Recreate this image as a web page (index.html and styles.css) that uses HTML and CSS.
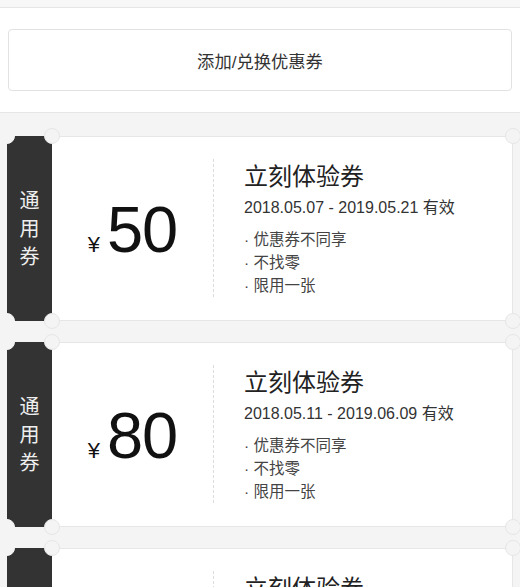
FILE: index.html
```html
<!DOCTYPE html>
<html lang="zh">
<head>
<meta charset="utf-8">
<title>优惠券</title>
<link rel="stylesheet" href="styles.css">
</head>
<body>
<div class="top-band"></div>
<div class="add-section">
  <button class="add-btn">添加/兑换优惠券</button>
</div>
<div class="coupons">
  <div class="coupon">
    <div class="tab"><span>通</span><span>用</span><span>券</span></div>
    <div class="body">
      <div class="price"><span class="yen">¥</span><span class="amount">50</span></div>
      <div class="divider"></div>
      <div class="info">
        <div class="title">立刻体验券</div>
        <div class="date">2018.05.07 - 2019.05.21 有效</div>
        <ul class="rules">
          <li>· 优惠券不同享</li>
          <li>· 不找零</li>
          <li>· 限用一张</li>
        </ul>
      </div>
    </div>
    <span class="notch n-tl"></span><span class="notch n-tm"></span><span class="notch n-tr"></span>
    <span class="notch n-bl"></span><span class="notch n-bm"></span><span class="notch n-br"></span>
  </div>
  <div class="coupon">
    <div class="tab"><span>通</span><span>用</span><span>券</span></div>
    <div class="body">
      <div class="price"><span class="yen">¥</span><span class="amount">80</span></div>
      <div class="divider"></div>
      <div class="info">
        <div class="title">立刻体验券</div>
        <div class="date">2018.05.11 - 2019.06.09 有效</div>
        <ul class="rules">
          <li>· 优惠券不同享</li>
          <li>· 不找零</li>
          <li>· 限用一张</li>
        </ul>
      </div>
    </div>
    <span class="notch n-tl"></span><span class="notch n-tm"></span><span class="notch n-tr"></span>
    <span class="notch n-bl"></span><span class="notch n-bm"></span><span class="notch n-br"></span>
  </div>
  <div class="coupon">
    <div class="tab"><span>通</span><span>用</span><span>券</span></div>
    <div class="body">
      <div class="price"><span class="yen">¥</span><span class="amount">30</span></div>
      <div class="divider"></div>
      <div class="info">
        <div class="title">立刻体验券</div>
        <div class="date">2018.05.11 - 2019.06.09 有效</div>
        <ul class="rules">
          <li>· 优惠券不同享</li>
          <li>· 不找零</li>
          <li>· 限用一张</li>
        </ul>
      </div>
    </div>
    <span class="notch n-tl"></span><span class="notch n-tm"></span><span class="notch n-tr"></span>
    <span class="notch n-bl"></span><span class="notch n-bm"></span><span class="notch n-br"></span>
  </div>
</div>
</body>
</html>
```
FILE: styles.css
```css
* { box-sizing: border-box; }
html, body {
  margin: 0;
  padding: 0;
  background: #f4f4f4;
  font-family: "Liberation Sans", "Noto Sans CJK SC", sans-serif;
  color: #333;
}
.top-band {
  height: 8px;
  background: #f7f7f7;
  border-bottom: 1px solid #e6e6e6;
}
.add-section {
  background: #fff;
  padding: 21px 8px 21px 8px;
  border-bottom: 1px solid #e6e6e6;
}
.add-btn {
  display: block;
  width: 100%;
  height: 62px;
  background: #fff;
  border: 1px solid #e2e2e2;
  border-radius: 4px;
  font-family: "Liberation Sans", "Noto Sans CJK SC", sans-serif;
  font-size: 17.3px;
  color: #333;
  padding: 0;
}
.coupons {
  padding: 23px 7px 0 7px;
}
.coupon {
  position: relative;
  display: flex;
  height: 185px;
  margin-bottom: 21px;
}
.tab {
  width: 45px;
  flex: none;
  background: #333;
  color: #eee;
  display: flex;
  flex-direction: column;
  align-items: center;
  justify-content: center;
  font-size: 20px;
  line-height: 28px;
}
.body {
  flex: 1;
  display: flex;
  background: #fff;
  border: 1px solid #e6e6e6;
  border-left: none;
}
.price {
  width: 161px;
  flex: none;
  display: flex;
  align-items: baseline;
  justify-content: center;
  padding-top: 2px;
  align-self: center;
  color: #111;
}
.yen {
  font-size: 22px;
  margin-right: 7px;
}
.amount {
  font-size: 65px;
  line-height: 70px;
  letter-spacing: -1px;
}
.divider {
  width: 0;
  border-left: 1px dashed #dcdcdc;
  margin: 22px 0 23px 0;
}
.info {
  padding: 25px 0 0 30px;
}
.title {
  font-size: 24px;
  line-height: 30px;
  color: #222;
}
.date {
  font-size: 16px;
  line-height: 22px;
  margin-top: 5px;
  color: #333;
}
.rules {
  list-style: none;
  margin: 9px 0 0 0;
  padding: 0;
  font-size: 15.5px;
  line-height: 23px;
  color: #444;
}
.notch {
  position: absolute;
  width: 16px;
  height: 16px;
  border-radius: 50%;
  background: #f4f4f4;
  border: 1px solid #e6e6e6;
}
.n-tl, .n-tm, .n-tr { top: -8px; }
.n-bl, .n-bm, .n-br { bottom: -8px; }
.n-tl, .n-bl { left: -8px; border-color: #f4f4f4; }
.n-tm, .n-bm { left: 37px; }
.n-tr, .n-br { right: -8px; }
```
